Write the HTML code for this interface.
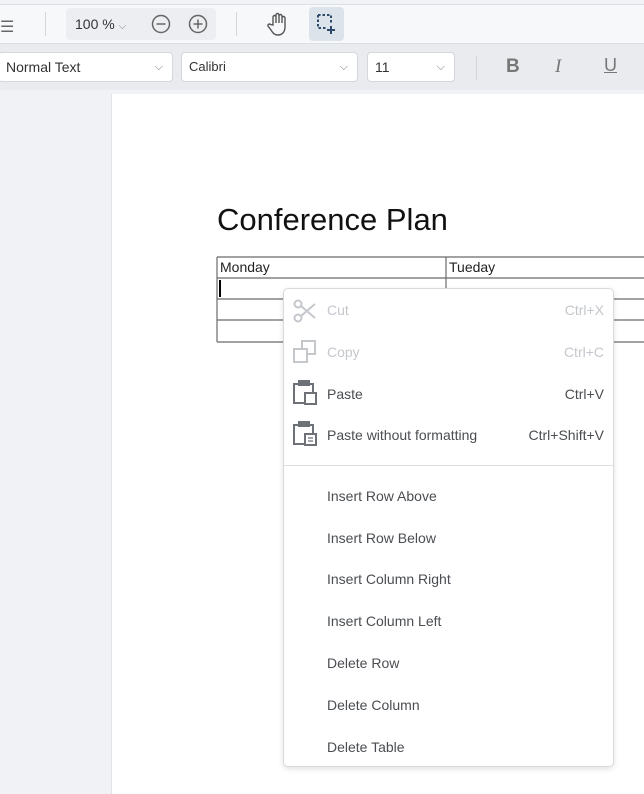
<!DOCTYPE html>
<html><head><style>
*{margin:0;padding:0;box-sizing:border-box}
body{width:644px;height:786px;overflow:hidden;background:#f0f2f5;font-family:"Liberation Sans",sans-serif;position:relative}
.abs{position:absolute}
.tb1{left:0;top:4px;width:644px;height:40px;background:#f7f8fa;border-top:1px solid #dcdfe3;border-bottom:1px solid #dcdfe3}
.tb2{left:0;top:44px;width:644px;height:46px;background:#e9ebee}
.sel{background:#fff;border:1px solid #d4d7dc;border-radius:4px;height:30px;top:52px;font-size:14px;color:#333;line-height:28px;padding-left:7px}
.chev{position:absolute;right:9px;top:0;color:#777;font-size:11px}
.page{left:111px;top:94px;width:540px;height:700px;background:#fff;border-left:1px solid #e0e2e6}
.menu{left:283px;top:288px;width:331px;height:479px;background:#fff;border:1px solid #d8dadd;border-radius:5px;box-shadow:0 2px 6px rgba(0,0,0,.12)}
.it{position:absolute;left:43px;font-size:14px;color:#4a4d52}
.sc{position:absolute;right:9px;font-size:14px;color:#4a4d52}
.dis{color:#c4c7cc}
</style></head><body>
<div class="abs tb1"></div>
<div class="abs" style="left:0;top:17px;font-size:16px;color:#666">☰</div>
<div class="abs" style="left:45px;top:12px;width:1px;height:24px;background:#d4d7dc"></div>
<div class="abs" style="left:66px;top:8px;width:150px;height:32px;background:#eceef1;border-radius:4px"></div>
<div class="abs" style="left:75px;top:16px;font-size:14px;color:#333">100 % <span style="font-size:10px;color:#888">⌵</span></div>
<svg class="abs" style="left:150px;top:13px" width="22" height="22"><circle cx="11" cy="11" r="8.5" fill="none" stroke="#666" stroke-width="1.5"/><path d="M6.5 11h9" stroke="#666" stroke-width="1.5"/></svg>
<svg class="abs" style="left:187px;top:13px" width="22" height="22"><circle cx="11" cy="11" r="8.5" fill="none" stroke="#666" stroke-width="1.5"/><path d="M6.5 11h9M11 6.5v9" stroke="#666" stroke-width="1.5"/></svg>
<div class="abs" style="left:236px;top:12px;width:1px;height:24px;background:#d4d7dc"></div>
<svg class="abs" style="left:266px;top:11px" width="24" height="26"><path d="M7 14V6a1.5 1.5 0 0 1 3 0v6V4a1.5 1.5 0 0 1 3 0v8V5a1.5 1.5 0 0 1 3 0v7V7a1.5 1.5 0 0 1 3 0v9c0 5-3 8-7 8s-5-2-7-5l-3-4a1.5 1.5 0 0 1 2.5-1.5z" fill="none" stroke="#555" stroke-width="1.4"/></svg>
<div class="abs" style="left:309px;top:7px;width:35px;height:34px;background:#dde3ea;border-radius:4px"></div>
<svg class="abs" style="left:316px;top:13px" width="22" height="22"><path d="M2 2h13v8M2 2v13h8" fill="none" stroke="#2d4a6b" stroke-width="2" stroke-dasharray="2.5 2"/><path d="M15 13v8M11 17h8" stroke="#2d4a6b" stroke-width="2"/></svg>
<div class="abs tb2"></div>
<div class="abs sel" style="left:-2px;width:175px">Normal Text<span class="chev">⌵</span></div>
<div class="abs sel" style="left:181px;width:177px;font-size:13px">Calibri<span class="chev">⌵</span></div>
<div class="abs sel" style="left:367px;width:88px">11<span class="chev">⌵</span></div>
<div class="abs" style="left:476px;top:56px;width:1px;height:24px;background:#d0d3d8"></div>
<div class="abs" style="left:506px;top:56px;font-size:19px;font-weight:bold;color:#777">B</div>
<div class="abs" style="left:555px;top:56px;font-size:19px;font-style:italic;color:#777;font-family:'Liberation Serif',serif">I</div>
<div class="abs" style="left:604px;top:55px;font-size:18px;color:#777;text-decoration:underline">U</div>
<div class="abs page"></div>
<div class="abs" style="left:217px;top:202px;font-size:31px;color:#111">Conference Plan</div>
<svg class="abs" style="left:216px;top:256px" width="430" height="88"><g stroke="#6b6b6b" stroke-width="1.2" fill="none"><path d="M1 1h430M1 22h430M1 43h430M1 64h430M1 86h430M1 1v85M230 1v85"/></g><rect x="3" y="24" width="2" height="17" fill="#000"/></svg>
<div class="abs" style="left:220px;top:259px;font-size:14px;color:#222">Monday</div>
<div class="abs" style="left:449px;top:259px;font-size:14px;color:#222">Tueday</div>
<div class="abs menu">
<svg class="abs" style="left:8px;top:9px" width="26" height="26"><g fill="none" stroke="#c4c7cc" stroke-width="2"><circle cx="6" cy="6" r="3.5"/><circle cx="6" cy="20" r="3.5"/><path d="M9 8l14 12M9 18L23 6"/></g></svg>
<div class="it dis" style="top:13px">Cut</div><div class="sc dis" style="top:13px">Ctrl+X</div>
<svg class="abs" style="left:8px;top:50px" width="26" height="26"><g fill="none" stroke="#c4c7cc" stroke-width="2"><rect x="10" y="2" width="13" height="13"/><rect x="2" y="10" width="13" height="13" fill="#fff"/></g></svg>
<div class="it dis" style="top:55px">Copy</div><div class="sc dis" style="top:55px">Ctrl+C</div>
<svg class="abs" style="left:8px;top:91px" width="26" height="26"><g fill="none" stroke="#6e7278" stroke-width="2"><path d="M13 23H2V4h19v8"/><rect x="7" y="1" width="10" height="4" fill="#6e7278"/><rect x="13" y="13" width="11" height="11" fill="#fff"/></g></svg>
<div class="it" style="top:97px">Paste</div><div class="sc" style="top:97px">Ctrl+V</div>
<svg class="abs" style="left:8px;top:132px" width="26" height="26"><g fill="none" stroke="#6e7278" stroke-width="2"><path d="M13 23H2V4h19v8"/><rect x="7" y="1" width="10" height="4" fill="#6e7278"/><rect x="13" y="13" width="11" height="11" fill="#fff"/><path d="M16 17h5M16 20h5" stroke-width="1.3"/></g></svg>
<div class="it" style="top:138px">Paste without formatting</div><div class="sc" style="top:138px">Ctrl+Shift+V</div>
<div class="abs" style="left:0;top:176px;width:329px;height:1px;background:#dcdee1"></div>
<div class="it" style="top:199px">Insert Row Above</div>
<div class="it" style="top:241px">Insert Row Below</div>
<div class="it" style="top:282px">Insert Column Right</div>
<div class="it" style="top:324px">Insert Column Left</div>
<div class="it" style="top:366px">Delete Row</div>
<div class="it" style="top:408px">Delete Column</div>
<div class="it" style="top:450px">Delete Table</div>
</div>
</body></html>
